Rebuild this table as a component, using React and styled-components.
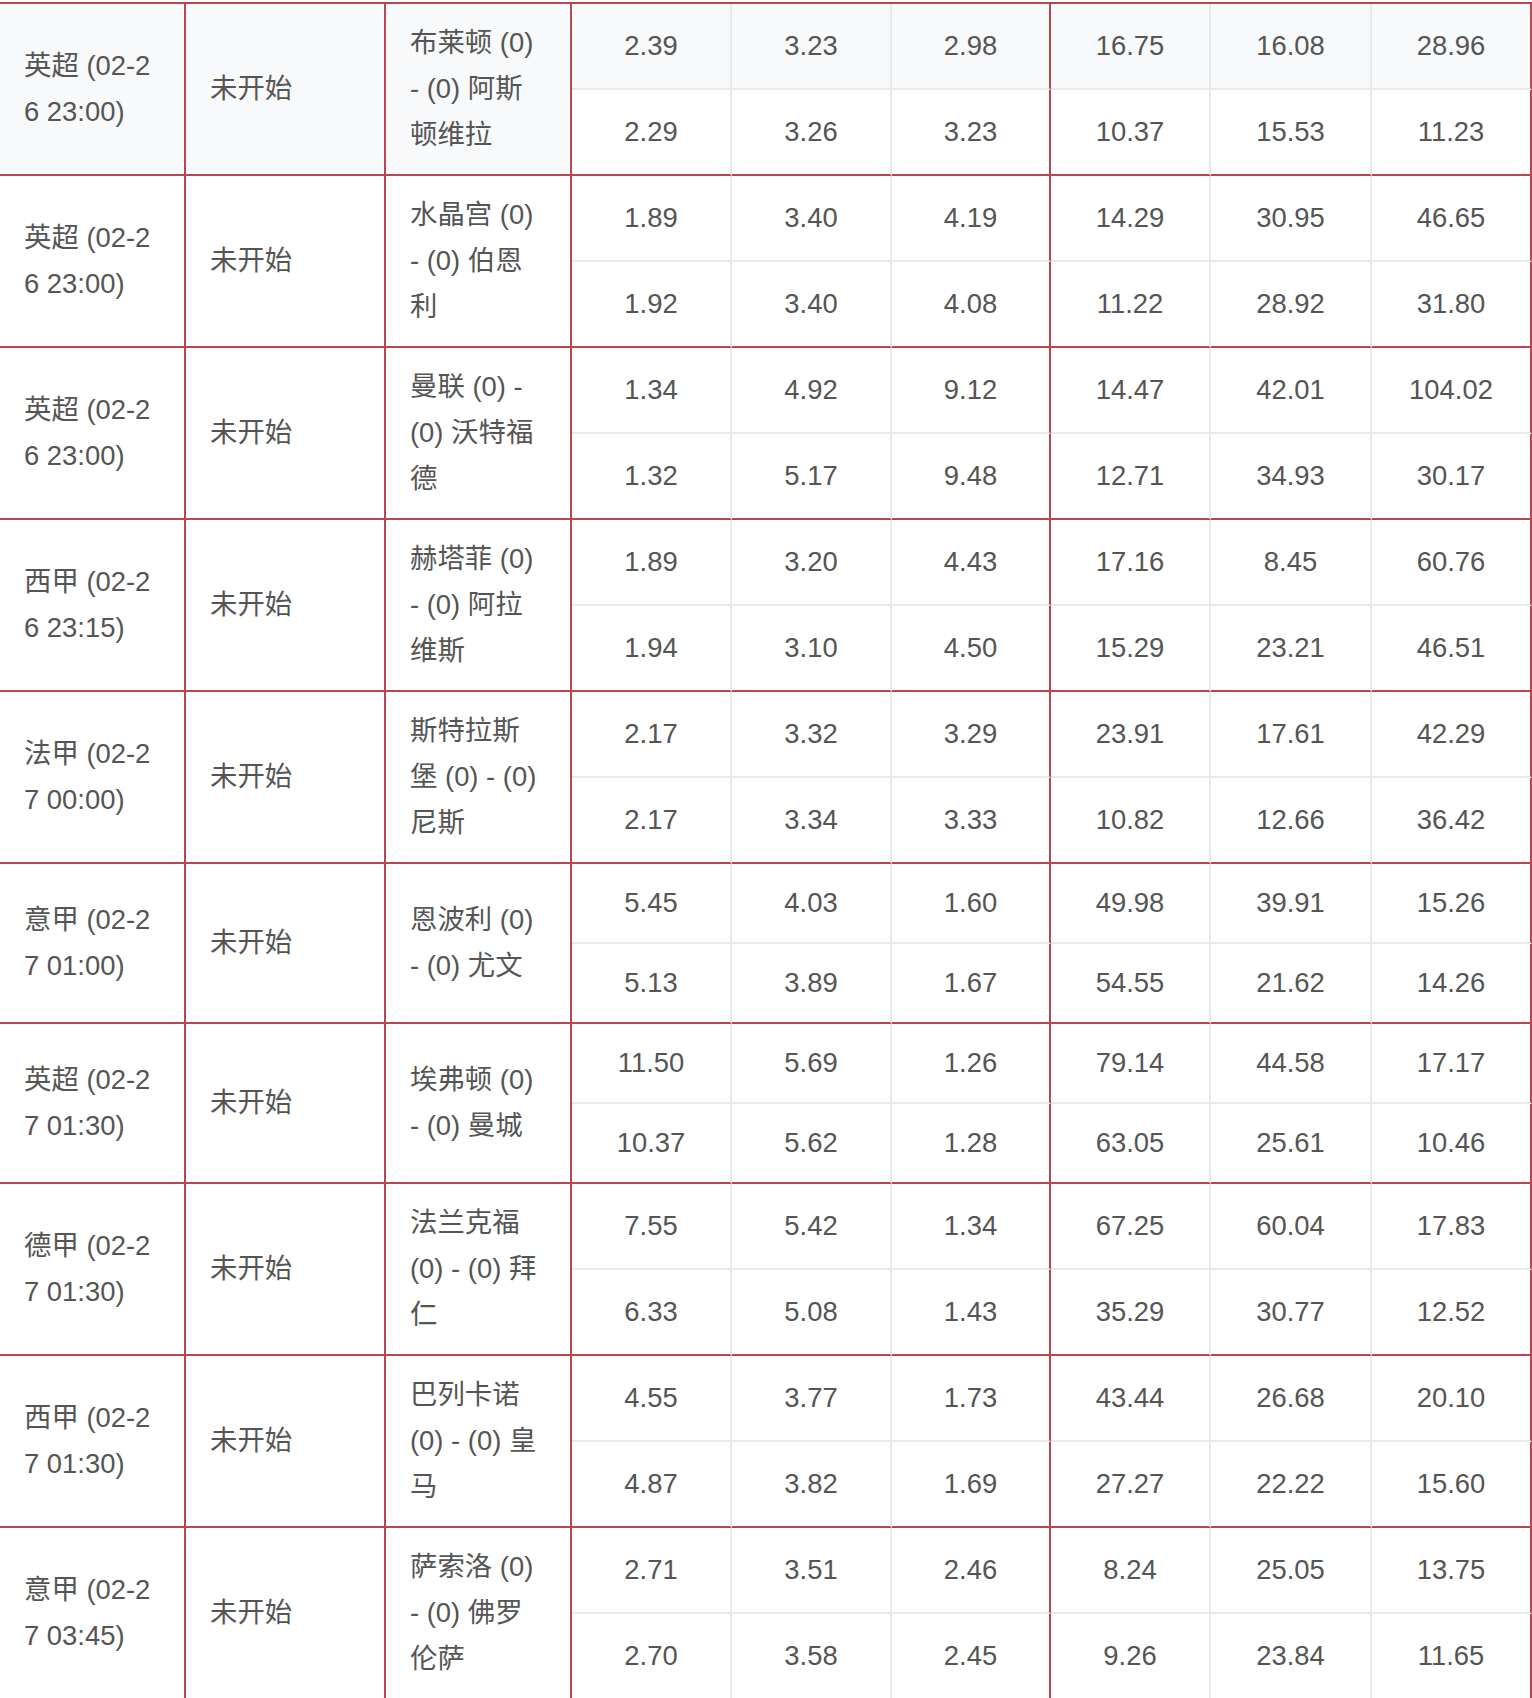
import React from 'react'
import styled, { createGlobalStyle } from 'styled-components'

const RED = '#b9474f'
const GRID = '#e7e9ec'

const GlobalStyle = createGlobalStyle`
  html, body {
    margin: 0;
    padding: 0;
    background: #fff;
  }
  body {
    font-family: 'Liberation Sans', 'Noto Sans CJK SC', sans-serif;
    color: #555;
  }
`

const matches = [
  { league: '英超', time: '02-26 23:00', home: '布莱顿', away: '阿斯顿维拉',
    odds: [['2.39', '3.23', '2.98', '16.75', '16.08', '28.96'], ['2.29', '3.26', '3.23', '10.37', '15.53', '11.23']] },
  { league: '英超', time: '02-26 23:00', home: '水晶宫', away: '伯恩利',
    odds: [['1.89', '3.40', '4.19', '14.29', '30.95', '46.65'], ['1.92', '3.40', '4.08', '11.22', '28.92', '31.80']] },
  { league: '英超', time: '02-26 23:00', home: '曼联', away: '沃特福德',
    odds: [['1.34', '4.92', '9.12', '14.47', '42.01', '104.02'], ['1.32', '5.17', '9.48', '12.71', '34.93', '30.17']] },
  { league: '西甲', time: '02-26 23:15', home: '赫塔菲', away: '阿拉维斯',
    odds: [['1.89', '3.20', '4.43', '17.16', '8.45', '60.76'], ['1.94', '3.10', '4.50', '15.29', '23.21', '46.51']] },
  { league: '法甲', time: '02-27 00:00', home: '斯特拉斯堡', away: '尼斯',
    odds: [['2.17', '3.32', '3.29', '23.91', '17.61', '42.29'], ['2.17', '3.34', '3.33', '10.82', '12.66', '36.42']] },
  { league: '意甲', time: '02-27 01:00', home: '恩波利', away: '尤文',
    odds: [['5.45', '4.03', '1.60', '49.98', '39.91', '15.26'], ['5.13', '3.89', '1.67', '54.55', '21.62', '14.26']] },
  { league: '英超', time: '02-27 01:30', home: '埃弗顿', away: '曼城',
    odds: [['11.50', '5.69', '1.26', '79.14', '44.58', '17.17'], ['10.37', '5.62', '1.28', '63.05', '25.61', '10.46']] },
  { league: '德甲', time: '02-27 01:30', home: '法兰克福', away: '拜仁',
    odds: [['7.55', '5.42', '1.34', '67.25', '60.04', '17.83'], ['6.33', '5.08', '1.43', '35.29', '30.77', '12.52']] },
  { league: '西甲', time: '02-27 01:30', home: '巴列卡诺', away: '皇马',
    odds: [['4.55', '3.77', '1.73', '43.44', '26.68', '20.10'], ['4.87', '3.82', '1.69', '27.27', '22.22', '15.60']] },
  { league: '意甲', time: '02-27 03:45', home: '萨索洛', away: '佛罗伦萨',
    odds: [['2.71', '3.51', '2.46', '8.24', '25.05', '13.75'], ['2.70', '3.58', '2.45', '9.26', '23.84', '11.65']] },
]

const colWidths = [186, 200, 186, 160, 160, 159, 160, 161, 160]

const Table = styled.table`
  width: 1532px;
  table-layout: fixed;
  border-collapse: separate;
  border-spacing: 0;
  margin-top: 2px;
  border-top: 2px solid ${RED};
  font-size: 27.4px;
  line-height: 46px;
`

const Row = styled.tr`
  background: ${p => (p.$shaded ? '#f8f9fa' : '#fff')};
`

const InfoCell = styled.td`
  padding: 16px 26px 16px 24px;
  vertical-align: middle;
  text-align: left;
  border-right: 2px solid ${RED};
  border-bottom: 2px solid ${RED};
  word-break: ${p => (p.$breakAll ? 'break-all' : 'normal')};
`

const OddsCell = styled.td`
  padding: 16px 4px;
  vertical-align: middle;
  text-align: center;
  white-space: nowrap;
  border-right: 2px solid ${p => (p.$groupEnd ? RED : GRID)};
  border-bottom: 2px solid ${p => (p.$last ? RED : GRID)};
`

function OddsRow({ values, last, shaded, children }) {
  return (
    <Row $shaded={shaded}>
      {children}
      {values.map((v, i) => (
        <OddsCell key={i} $groupEnd={i === 2 || i === 5} $last={last}>{v}</OddsCell>
      ))}
    </Row>
  )
}

export default function App() {
  return (
    <>
      <GlobalStyle />
      <Table>
        <colgroup>
          {colWidths.map((w, i) => <col key={i} style={{ width: w }} />)}
        </colgroup>
        <tbody>
          {matches.map((m, idx) => (
            <React.Fragment key={idx}>
              <OddsRow values={m.odds[0]} shaded={idx === 0}>
                <InfoCell rowSpan={2} $breakAll>{m.league} ({m.time})</InfoCell>
                <InfoCell rowSpan={2}>未开始</InfoCell>
                <InfoCell rowSpan={2}>{m.home} (0) - (0) {m.away}</InfoCell>
              </OddsRow>
              <OddsRow values={m.odds[1]} last />
            </React.Fragment>
          ))}
        </tbody>
      </Table>
    </>
  )
}
